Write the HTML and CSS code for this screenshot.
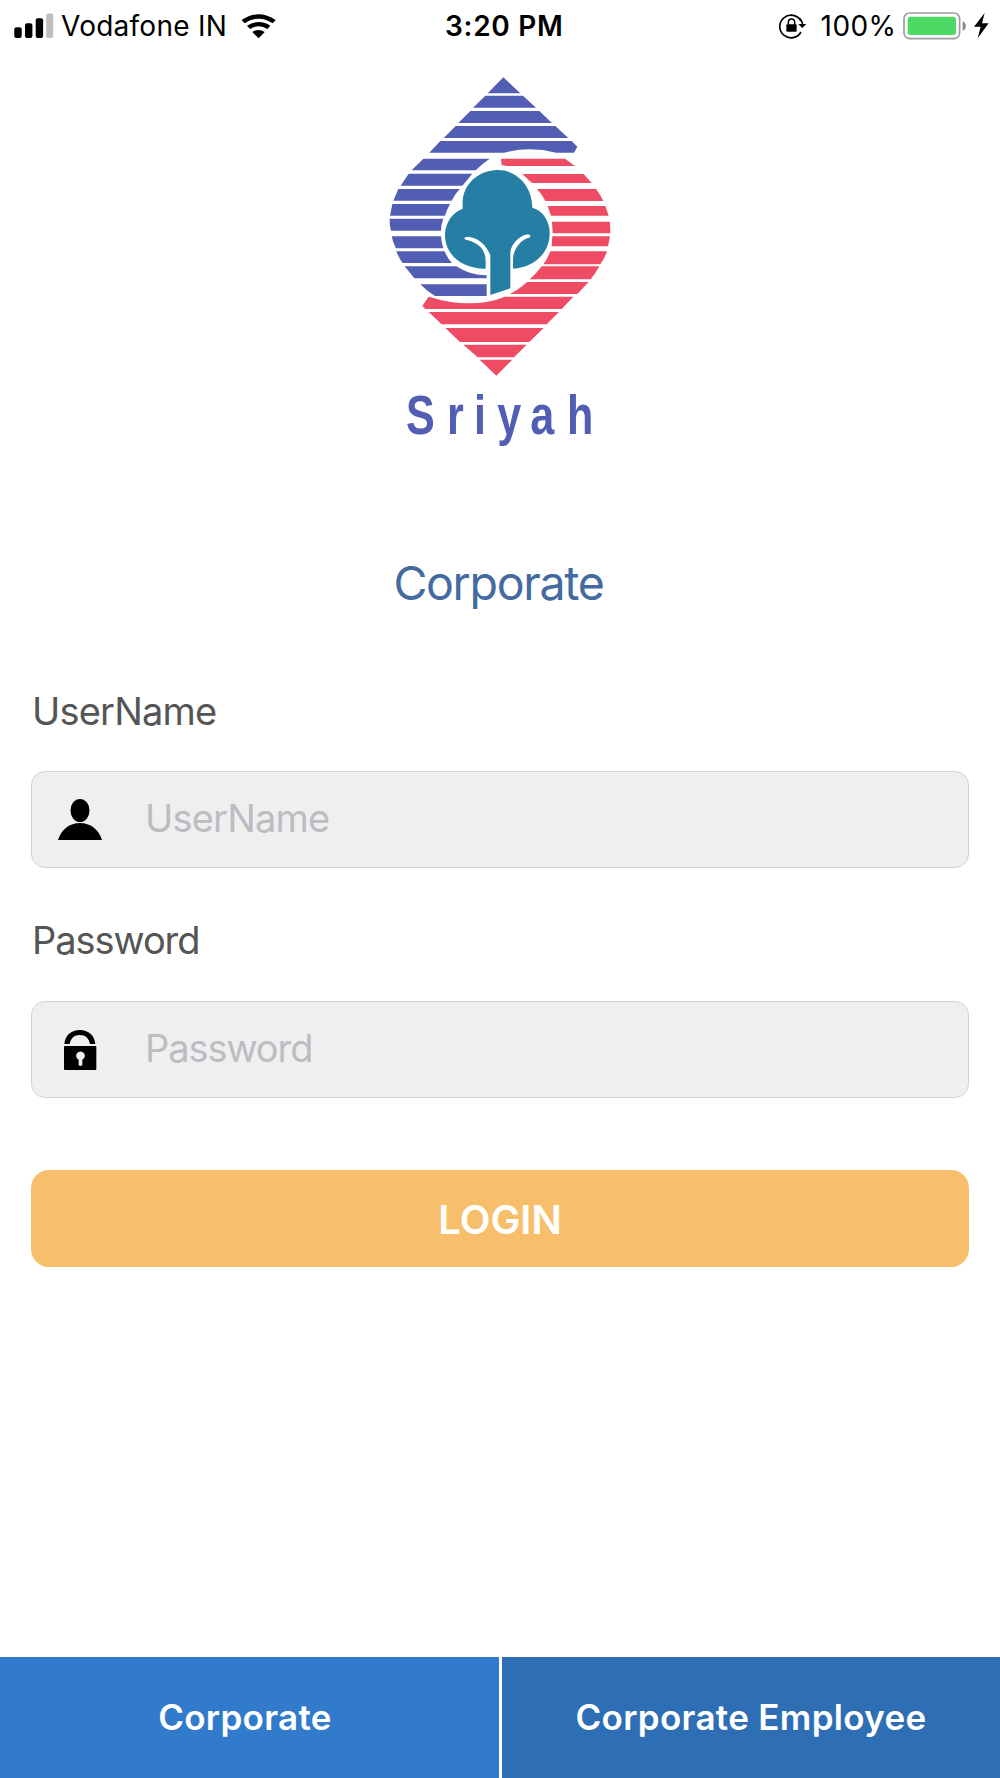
FILE: index.html
```html
<!DOCTYPE html>
<html lang="en">
<head>
<meta charset="utf-8">
<title>Sriyah Login</title>
<link rel="stylesheet" href="styles.css">
</head>
<body>
<div class="screen">
  <header class="status">
    <div class="status-left">
      <svg class="signal" viewBox="0 0 40 26" aria-hidden="true">
        <rect x="0.3" y="14.3" width="7.4" height="10.7" rx="2"/>
        <rect x="11" y="10.3" width="7.4" height="14.7" rx="2"/>
        <rect x="21.7" y="5.3" width="7.4" height="19.7" rx="2"/>
        <rect x="32.2" y="0.5" width="7" height="24.5" rx="2" fill="#bfbfbf"/>
      </svg>
      <span class="carrier">Vodafone IN</span>
      <svg class="wifi" viewBox="0 0 108 75" aria-hidden="true">
        <path d="M2 18Q25 1 52 1T104 18L95 28Q76 14 53 14T11 28Z"/>
        <path d="M18 35Q34 24 53 24T88 35L79 45Q67 37 53 37T27 45Z"/>
        <path d="M34 54Q43 48 53 48T71 54L53 73Z"/>
      </svg>
    </div>
    <div class="time">3:20 PM</div>
    <div class="status-right">
      <svg class="rotation" viewBox="0 0 84 76" aria-hidden="true">
        <path d="M66 24A34 34 0 1 0 66 57" fill="none" stroke="#000" stroke-width="5"/>
        <path d="M62 16Q71 25 71 36" fill="none" stroke="#000" stroke-width="5"/>
        <path d="M58 33H82L70 45Z"/>
        <rect x="22" y="34" width="31" height="22" rx="3"/>
        <path d="M28 35V28Q28 18 37.500 18T47 28V35" fill="none" stroke="#000" stroke-width="4.500"/>
      </svg>
      <span class="percent">100%</span>
      <svg class="battery" viewBox="0 0 190 84" aria-hidden="true">
        <rect x="3" y="3" width="167" height="77" rx="17" fill="#fff" stroke="#9c9c9c" stroke-width="5"/>
        <rect x="14" y="14" width="145" height="55" rx="8" fill="#4cd964"/>
        <path d="M179 27Q189 33 189 42T179 57Z" fill="#8c8c8c"/>
      </svg>
      <svg class="bolt" viewBox="0 0 46 76" aria-hidden="true">
        <path d="M32 0L0 41H20L11 76L44 31H24Z"/>
      </svg>
    </div>
  </header>

  <main class="content">
    <svg class="logo" viewBox="0 0 720 1140" role="img" aria-label="Sriyah">
      <g fill="#515eb3">
        <path d="M370 22L421 70H323Z"/>
        <path d="M316 77H429L468 113H279Z"/>
        <path d="M271 123H478L516 159H235Z"/>
        <path d="M227 168H526L565 204H191Z"/>
        <path d="M181 213H575L592 230L582 248H528Q450 228 372 248H148Z"/>
        <path d="M130 266H329Q305 282 287 301H95Z"/>
        <path d="M86 311H277L247 347H62Z"/>
        <path d="M55 357H239Q224 374 215 392H40Z"/>
        <path d="M37 402H210Q201 418 195 437H30Z"/>
        <path d="M29 446H190Q183 464 183 482H33Q28 464 29 446Z"/>
        <path d="M35 499H183Q184 518 190 535H48Q38 517 35 499Z"/>
        <path d="M49 544H194Q201 563 216 579H68Q56 563 49 544Z"/>
        <path d="M74 589H229Q269 616 320 616V625H103Z"/>
        <path d="M121 643H320V678H165Q140 663 121 643Z"/>
      </g>
      <g fill="#ee4b64">
        <path d="M363 266H555L585 288H380L365 285Z"/>
        <path d="M427 312H611L635 339H456Z"/>
        <path d="M471 357H648Q662 375 670 393H496Q486 373 471 357Z"/>
        <path d="M503 408H676L686 437H513Z"/>
        <path d="M516 455H690L691 490H518Z"/>
        <path d="M517 499H690L684 529H515Z"/>
        <path d="M511 544H681Q674 565 661 583H490Q502 567 511 544Z"/>
        <path d="M485 589H658Q647 610 632 628H449Q468 612 485 589Z"/>
        <path d="M441 636H626L592 672H389Q417 659 441 636Z"/>
        <path d="M146 680Q275 720 375 680H580L545 717H136L127 708Z"/>
        <path d="M146 726H537L500 763H185Z"/>
        <path d="M196 774H491L448 816H240Z"/>
        <path d="M250 824H440L402 862H293Z"/>
        <path d="M299 869H397L349 917Z"/>
      </g>
      <path fill="#257fa5" d="M248 416V398C248 342 297 300 353 300C411 300 457 349 457 413C490 422 509 454 509 489C509 552 461 592 399 596V566C401 536 422 508 448 503Q454 498 449 494C434 490 419 501 405 516Q391 533 391 548V655L331 675V556C319 524 294 503 264 500Q253 500 253 506Q257 510 264 511C297 520 317 540 317 573V596C241 597 195 550 195 495C195 459 217 427 248 416Z"/>
      <text class="wordmark" transform="scale(.77 1)" x="101 261 366 457 585 729" y="1091">Sriyah</text>
    </svg>

    <h1 class="title">Corporate</h1>

    <form class="form">
      <label class="label" for="user">UserName</label>
      <div class="field">
        <svg class="field-icon" viewBox="110 352 138 132" aria-hidden="true">
          <ellipse cx="179" cy="389.500" rx="28.500" ry="34.500"/>
          <path d="M113 478C123 446 148 427 179 427S235 446 245 478Z"/>
        </svg>
        <input class="input" id="user" type="text" placeholder="UserName">
      </div>
      <label class="label label-password" for="pass">Password</label>
      <div class="field">
        <svg class="field-icon" viewBox="110 354 138 132" aria-hidden="true">
          <path d="M132 402C134 376 153 360 178.500 360S223 376 225 402H209C206 385 195 375 178.500 375S151 385 148 402Z"/>
          <path fill-rule="evenodd" d="M134 408H225Q228 408 228 411V477Q228 480 225 480H134Q131 480 131 477V411Q131 408 134 408ZM175 449V465Q180.500 471 186 465V449A13 13 0 1 0 175 449Z"/>
        </svg>
        <input class="input input-password" id="pass" type="password" placeholder="Password">
      </div>
      <button class="login" type="button">LOGIN</button>
    </form>
  </main>

  <nav class="tabs">
    <a class="tab tab-active">Corporate</a>
    <a class="tab">Corporate Employee</a>
  </nav>
</div>
</body>
</html>
```
FILE: styles.css
```css
* { box-sizing: border-box; }

body {
  margin: 0;
  background: #fff;
  font-family: Inter, "Liberation Sans", sans-serif;
}

.screen {
  display: flex;
  flex-direction: column;
  width: 1000px;
  height: 1778px;
}

.status {
  display: grid;
  grid-template-columns: 431px 1fr auto;
  align-items: center;
  height: 50px;
  padding: 0 11px 0 14px;
  font-size: 28px;
  line-height: 50px;
  color: #000;
  white-space: nowrap;
}

.status-left,
.status-right {
  display: flex;
  align-items: center;
}

.carrier,
.time,
.percent { padding-top: 1px; line-height: 51px; }

.signal { width: 40px; height: 26px; }
.carrier { margin-left: 7px; letter-spacing: 0.25px; }
.wifi { width: 36px; height: 25px; margin-left: 13.5px; }
.time { font-weight: 600; letter-spacing: 0.7px; }
.rotation { width: 28px; height: 25.3px; }
.percent { margin-left: 14px; letter-spacing: 0.4px; }
.battery { width: 63.3px; height: 28px; margin-left: 7px; }
.bolt { width: 15.3px; height: 25.3px; margin-left: 7px; }

.content { flex: 1; }

.logo {
  display: block;
  width: 240px;
  height: 380px;
  margin: 20px 0 0 380px;
}

.wordmark {
  font: bold 168px "Liberation Sans", Arial, sans-serif;
  fill: #515eb3;
}

.title {
  margin: 103px 0 0;
  padding-right: 3px;
  font-size: 46.5px;
  font-weight: 400;
  line-height: 61px;
  letter-spacing: -1.3px;
  text-align: center;
  color: #446b9f;
}

.form {
  display: flex;
  flex-direction: column;
  margin: 74px 31px 0;
}

.label {
  padding-left: 1px;
  font-size: 38px;
  line-height: 46px;
  letter-spacing: -0.8px;
  color: #555;
}

.label-password { margin: -1px 0 1px; }

.label-password,
.input.input-password { letter-spacing: -1.05px; }

.field {
  display: flex;
  align-items: center;
  height: 97px;
  margin: 37px 0 50px;
  padding: 0 25px 0 24.7px;
  border: 1px solid #d2d2d2;
  border-radius: 14px;
  background: #efefef;
}

.field-icon { width: 46px; height: 44px; }

.input {
  flex: 1;
  min-width: 0;
  height: 60px;
  margin: 0 0 3px 42.3px;
  padding: 0;
  border: 0;
  outline: 0;
  background: transparent;
  font: 400 38px Inter, "Liberation Sans", sans-serif;
  letter-spacing: -0.8px;
}

.input::placeholder { color: #bcbcc2; opacity: 1; }

.login {
  height: 97px;
  margin-top: 22px;
  padding: 2px 0 0;
  border: 0;
  border-radius: 18px;
  background: #f7bf6b;
  color: #fff;
  font: 600 40px Inter, "Liberation Sans", sans-serif;
}

.tabs {
  display: grid;
  grid-template-columns: 499px 1fr;
  column-gap: 3px;
  height: 121px;
}

.tab {
  display: flex;
  align-items: center;
  justify-content: center;
  padding-bottom: 1px;
  background: #2d6eb5;
  color: #fff;
  font-size: 35px;
  font-weight: 600;
  letter-spacing: 0.32px;
}

.tab-active { padding-right: 9px; background: #317acc; }
```
